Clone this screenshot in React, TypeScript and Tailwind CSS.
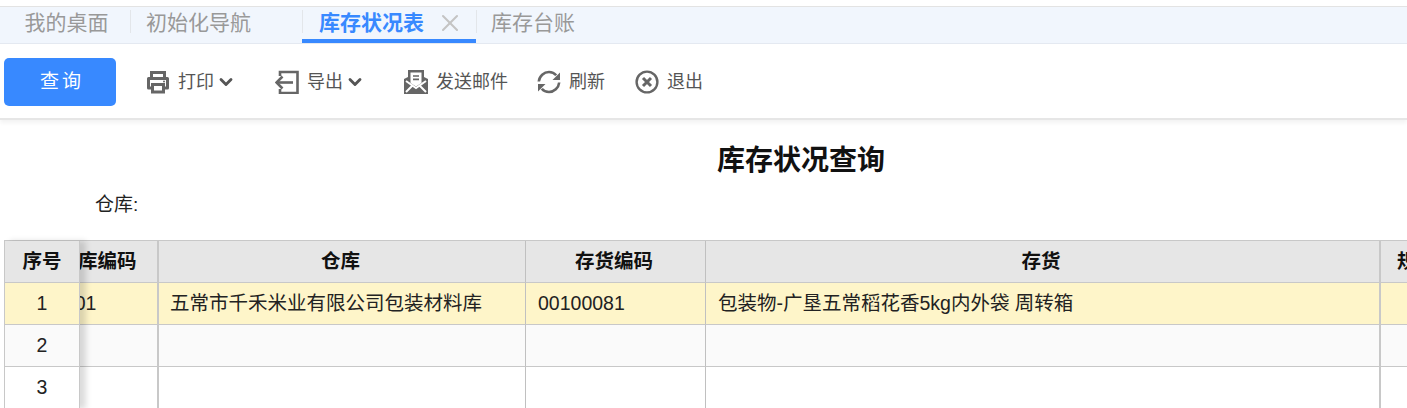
import React from "react";
import { X, ChevronDown } from "lucide-react";

const font = "font-['Liberation_Sans','Noto_Sans_CJK_SC',sans-serif]";

function PrinterIcon() {
  return (
    <svg width="24" height="24" viewBox="0 0 24 24" fill="none" stroke="#666" strokeWidth="3">
      <path d="M5.5 8V2.5h13V8" />
      <path d="M5.5 18H2.5V8.5h19V18h-3" strokeLinejoin="round" />
      <path d="M6.5 14.5h11v7.5h-11z" />
      <circle cx="18" cy="11.5" r="1" fill="#666" stroke="none" />
    </svg>
  );
}

function ExportIcon() {
  return (
    <svg width="24" height="24" viewBox="0 0 24 24" fill="none" stroke="#666" strokeWidth="2.6">
      <path d="M5 6V2h17.5v21H5v-4" />
      <path d="M18 12.5H1.5" />
      <path d="M7.5 6.5l-6 6 6 6" />
    </svg>
  );
}

function MailIcon() {
  return (
    <svg width="24" height="24" viewBox="0 0 24 24">
      <path fill="#666" d="M0 9l4-2V0h16v7l4 2v15H0z" />
      <path fill="#fff" d="M6.5 2.5h11V13L12 16.5 6.5 13z" />
      <path stroke="#666" strokeWidth="1.6" d="M9 6h6M9 9.4h6" />
      <path stroke="#fff" strokeWidth="2" fill="none" d="M2 11l10 7 10-7M2 22l7-7M22 22l-7-7" />
    </svg>
  );
}

function RefreshIcon() {
  return (
    <svg width="24" height="24" viewBox="0 0 24 24" fill="none">
      <path stroke="#666" strokeWidth="2.6" d="M1.8 11.5C2.3 6 7 2 12 2c3 0 5.5 1.2 7.2 3.3" />
      <path fill="#666" d="M23 2.5V10h-7.5z" />
      <path stroke="#666" strokeWidth="2.6" d="M22.2 12.5C21.7 18 17 22 12 22c-3 0-5.5-1.2-7.2-3.3" />
      <path fill="#666" d="M1 21.5V14h7.5z" />
    </svg>
  );
}

function ExitIcon() {
  return (
    <svg width="24" height="24" viewBox="0 0 24 24" fill="none" stroke="#666">
      <circle cx="12" cy="12" r="10.4" strokeWidth="2.4" />
      <path strokeWidth="3" d="M8 8l8 8M16 8l-8 8" />
    </svg>
  );
}

function ToolItem({ icon, label, caret, className }: { icon: React.ReactNode; label: string; caret?: boolean; className: string }) {
  return (
    <div className={`flex items-center ${className}`}>
      {icon}
      <span className="ml-2 text-[18px] leading-6 text-[#555]">{label}</span>
      {caret && <ChevronDown className="ml-[2px] size-[20px] text-[#555]" strokeWidth={3.4} />}
    </div>
  );
}

const rowBg = ["bg-[#fef5c9]", "bg-[#fafafa]", "bg-white"];

function HeadCell({ label, className }: { label: string; className: string }) {
  return (
    <div className={`flex h-[42px] shrink-0 items-center justify-center whitespace-nowrap border-b border-[#c8c8c8] bg-[#e6e6e6] text-[19.5px] font-bold text-[#111] ${className}`}>
      {label}
    </div>
  );
}

function BodyCell({ text, className, bg }: { text?: string; className: string; bg: string }) {
  return (
    <div className={`flex h-[42px] shrink-0 items-center overflow-hidden whitespace-nowrap border-b border-[#c8c8c8] text-[19.5px] text-[#222] ${bg} ${className}`}>
      {text}
    </div>
  );
}

const cols = [
  { label: "仓库编码", width: "w-[121px] border-r-2 border-r-[#c8c8c8]", pad: "pl-[15px]", headPad: "" },
  { label: "仓库", width: "w-[367px] border-r border-r-[#c0c0c0]", pad: "pl-[11px]", headPad: "pr-[3px]" },
  { label: "存货编码", width: "w-[180px] border-r border-r-[#c0c0c0]", pad: "pl-[12px]", headPad: "pr-[3px]" },
  { label: "存货", width: "w-[675px] border-r-2 border-r-[#c8c8c8]", pad: "pl-[12px]", headPad: "pr-[3px]" },
  { label: "规格型号", width: "w-[110px]", pad: "pl-[12px]", headPad: "" },
];

const rows = [
  ["0001", "五常市千禾米业有限公司包装材料库", "00100081", "包装物-广垦五常稻花香5kg内外袋 周转箱", ""],
  ["", "", "", "", ""],
  ["", "", "", "", ""],
];

export default function App() {
  return (
    <div className={`h-[408px] w-[1407px] overflow-hidden bg-white ${font}`}>
      <div className="h-[7px] border-b border-[#e3e3e3]" />

      <div className="flex h-[37px] items-stretch whitespace-nowrap border-b border-[#e4e9f1] bg-[#f1f6fd] text-[21px] text-[#999]">
        <div className="flex w-[130px] items-center justify-center pb-[5px] pl-[3px]">我的桌面</div>
        <div className="mb-[10px] mt-[3px] w-px bg-[#e3e6ea]" />
        <div className="flex w-[171px] items-center pb-[5px] pl-[15px]">初始化导航</div>
        <div className="mb-[10px] mt-[3px] w-px bg-[#e3e6ea]" />
        <div className="relative flex w-[173px] items-center pb-[5px] pl-[16px] font-bold text-[#3889ff]">
          库存状况表
          <X className="ml-[12px] size-[28px] text-[#c4c4c4]" strokeWidth={1.8} />
          <div className="absolute -left-px right-0 bottom-0 h-[4px] bg-[#3889ff]" />
        </div>
        <div className="mb-[10px] mt-[3px] w-px bg-[#e3e6ea]" />
        <div className="flex items-center pb-[5px] pl-[14px]">库存台账</div>
      </div>

      <div className="flex h-[76px] items-center border-b-2 border-[#e6e6e6] pl-1 pt-[2px] shadow-[0_3px_4px_rgba(0,0,0,0.05)]">
        <div className="flex h-[48px] w-[112px] items-center justify-center rounded-[5px] bg-[#3889ff] pl-[4px] text-[19px] tracking-[3px] text-white">
          查询
        </div>
        <ToolItem className="ml-[30px]" icon={<PrinterIcon />} label="打印" caret />
        <ToolItem className="ml-[39px]" icon={<ExportIcon />} label="导出" caret />
        <ToolItem className="ml-[39px]" icon={<MailIcon />} label="发送邮件" />
        <ToolItem className="ml-[29px]" icon={<RefreshIcon />} label="刷新" />
        <ToolItem className="ml-[30px]" icon={<ExitIcon />} label="退出" />
      </div>

      <div className="ml-[717px] mt-[23px] text-[28px] font-bold leading-[36px] text-[#111]">库存状况查询</div>
      <div className="ml-[95px] mt-[14px] text-[19px] leading-[24px] text-[#222]">仓库:</div>

      <div className="ml-1 mt-[23px] flex border-t border-[#c8c8c8]">
        <div className="relative z-10 w-[76px] shrink-0 border-l border-[#c8c8c8] shadow-[6px_0_6px_rgba(0,0,0,0.14)]">
          <HeadCell label="序号" className="w-full border-r border-r-[#c8c8c8]" />
          {rows.map((_, i) => (
            <div key={i} className={`flex h-[42px] items-center justify-center border-r border-b border-[#c8c8c8] text-[19.5px] text-[#222] ${rowBg[i]}`}>
              {i + 1}
            </div>
          ))}
        </div>
        <div className="min-w-0 flex-1 overflow-hidden">
          <div className="-ml-[42px] flex w-max">
            {cols.map((c) => (
              <HeadCell key={c.label} label={c.label} className={`${c.width} ${c.headPad}`} />
            ))}
          </div>
          {rows.map((r, i) => (
            <div key={i} className="-ml-[42px] flex w-max">
              {cols.map((c, j) => (
                <BodyCell key={c.label} text={r[j]} className={`${c.width} ${c.pad}`} bg={rowBg[i]} />
              ))}
            </div>
          ))}
        </div>
      </div>
    </div>
  );
}
